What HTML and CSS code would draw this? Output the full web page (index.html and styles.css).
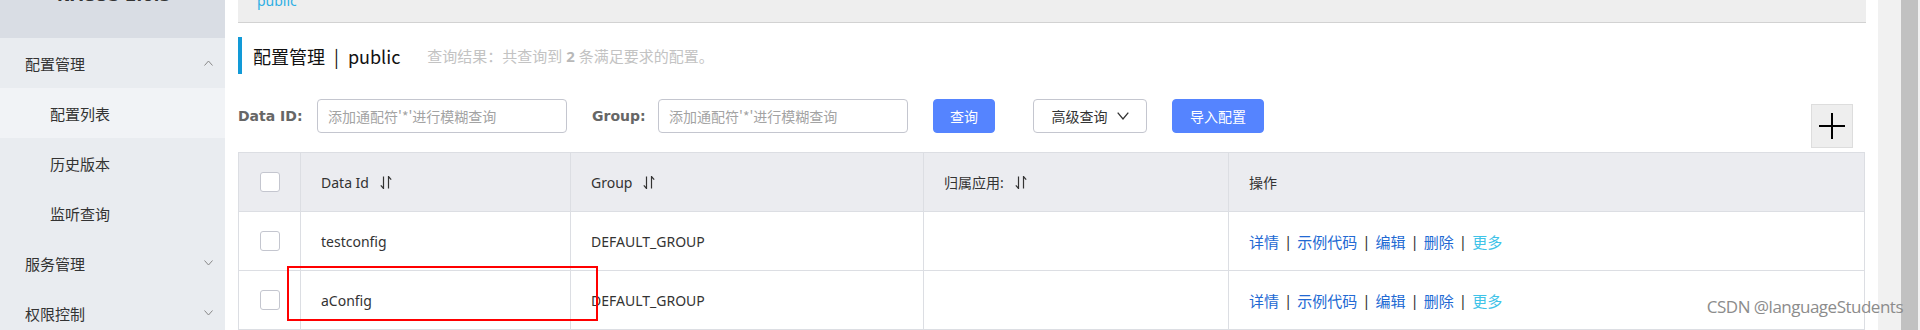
FILE: index.html
```html
<!DOCTYPE html>
<html lang="zh-CN">
<head>
    <meta charset="UTF-8">
    <meta name="viewport" content="width=device-width, initial-scale=1.0">
    <title>配置列表</title>
    <link rel="stylesheet" href="styles.css">
</head>
<body>
    <div class="page">
        <aside class="sidebar">
            <div class="logo"><span class="logo-text">NACOS 2.0.3</span></div>
            <div class="menu-item">
                <span>配置管理</span>
                <svg class="menu-arrow" viewBox="0 0 9 6"><polyline points="0.5,5.5 4.5,1 8.5,5.5" /></svg>
            </div>
            <div class="menu-sub active">配置列表</div>
            <div class="menu-sub">历史版本</div>
            <div class="menu-sub">监听查询</div>
            <div class="menu-item">
                <span>服务管理</span>
                <svg class="menu-arrow" viewBox="0 0 9 6"><polyline points="0.5,0.5 4.5,5 8.5,0.5" /></svg>
            </div>
            <div class="menu-item">
                <span>权限控制</span>
                <svg class="menu-arrow" viewBox="0 0 9 6"><polyline points="0.5,0.5 4.5,5 8.5,0.5" /></svg>
            </div>
        </aside>

        <main class="main">
            <div class="crumbs"><span>public</span></div>

            <div class="title-row">
                <h2 class="page-title">配置管理<span class="sep">|</span>public</h2>
                <span class="result">查询结果：共查询到 <b>2</b> 条满足要求的配置。</span>
            </div>

            <div class="filter-row">
                <label class="filter-label label-id" for="data-id">Data ID:</label>
                <input class="filter-input" id="data-id" type="text" placeholder="添加通配符'*'进行模糊查询">
                <label class="filter-label label-group" for="group">Group:</label>
                <input class="filter-input" id="group" type="text" placeholder="添加通配符'*'进行模糊查询">
                <button type="button" class="btn btn-primary btn-query">查询</button>
                <button type="button" class="btn btn-normal btn-advanced">
                    高级查询
                    <svg class="btn-arrow" viewBox="0 0 12 8"><polyline points="0.7,0.7 6,7 11.3,0.7" /></svg>
                </button>
                <button type="button" class="btn btn-primary btn-import">导入配置</button>
                <button type="button" class="btn-add">
                    <svg viewBox="0 0 26 26"><line x1="0" y1="13" x2="26" y2="13" /><line x1="13" y1="0" x2="13" y2="26" /></svg>
                </button>
            </div>

            <div class="table">
                <div class="table-row table-head">
                    <div class="cell cell-check"><span class="checkbox"></span></div>
                    <div class="cell">Data Id
                        <svg class="sort-icon" viewBox="0 0 12 13"><path d="M3.5 0.5V12.5L0.8 9.4M8.5 12.5V0.5L11.2 3.6" /></svg>
                    </div>
                    <div class="cell">Group
                        <svg class="sort-icon" viewBox="0 0 12 13"><path d="M3.5 0.5V12.5L0.8 9.4M8.5 12.5V0.5L11.2 3.6" /></svg>
                    </div>
                    <div class="cell">归属应用:
                        <svg class="sort-icon" viewBox="0 0 12 13"><path d="M3.5 0.5V12.5L0.8 9.4M8.5 12.5V0.5L11.2 3.6" /></svg>
                    </div>
                    <div class="cell">操作</div>
                </div>
                <div class="table-row">
                    <div class="cell cell-check"><span class="checkbox"></span></div>
                    <div class="cell">testconfig</div>
                    <div class="cell">DEFAULT_GROUP</div>
                    <div class="cell"></div>
                    <div class="cell actions">
                        <a>详情</a><span class="bar">|</span><a>示例代码</a><span class="bar">|</span><a>编辑</a><span class="bar">|</span><a>删除</a><span class="bar">|</span><a class="more">更多</a>
                    </div>
                </div>
                <div class="table-row">
                    <div class="cell cell-check"><span class="checkbox"></span></div>
                    <div class="cell">aConfig</div>
                    <div class="cell">DEFAULT_GROUP</div>
                    <div class="cell"></div>
                    <div class="cell actions">
                        <a>详情</a><span class="bar">|</span><a>示例代码</a><span class="bar">|</span><a>编辑</a><span class="bar">|</span><a>删除</a><span class="bar">|</span><a class="more">更多</a>
                    </div>
                </div>
            </div>
        </main>

        <div class="scrollbar">
            <div class="scroll-track"></div>
            <div class="scroll-thumb"></div>
        </div>
    </div>

    <div class="highlight"></div>
    <div class="watermark">CSDN @languageStudents</div>
</body>
</html>
```

FILE: styles.css
```css
* {
    box-sizing: border-box;
}
body {
    margin: 0;
    width: 1920px;
    height: 330px;
    overflow: hidden;
    position: relative;
    font-family: "Noto Sans", "Noto Sans CJK SC", sans-serif;
    font-size: 14px;
    color: #333;
    background-color: #fff;
}
.page {
    display: flex;
    height: 330px;
}

/* sidebar */
.sidebar {
    width: 225px;
    flex-shrink: 0;
    background-color: #e9ecf0;
}
.logo {
    height: 38px;
    background-color: #d9dde4;
    overflow: hidden;
    padding-left: 57px;
}
.logo-text {
    display: block;
    margin-top: -14px;
    font: bold 16px/20px "DejaVu Sans", sans-serif;
    color: #333;
}
.menu-item {
    height: 50px;
    display: flex;
    align-items: center;
    justify-content: space-between;
    padding: 0 12px 0 25px;
    font-size: 15px;
    color: #333;
}
.menu-sub {
    height: 50px;
    display: flex;
    align-items: center;
    padding-left: 50px;
    font-size: 15px;
    color: #333;
}
.menu-sub.active {
    background-color: #f1f3f6;
}
.menu-arrow {
    width: 9px;
    height: 6px;
    fill: none;
    stroke: #888;
    stroke-width: 1;
}

/* main */
.main {
    flex: 1;
    min-width: 0;
    padding: 0 12px 0 13px;
}
.crumbs {
    height: 23px;
    background-color: #eee;
    border-bottom: 1px solid #d2d2d2;
    overflow: hidden;
    padding-left: 19px;
}
.crumbs span {
    display: block;
    margin-top: -9px;
    line-height: 20px;
    color: #2eaee4;
}
.title-row {
    margin-top: 14px;
    height: 37px;
    border-left: 4px solid #129ad7;
    padding-left: 11px;
    display: flex;
    align-items: center;
}
.page-title {
    margin: 0;
    font-family: "Noto Sans CJK SC", sans-serif;
    font-size: 18px;
    font-weight: normal;
    color: #111;
}
.page-title .sep {
    margin: 0 9px;
}
.result {
    margin-left: 27px;
    font-size: 15px;
    color: #c3c3c3;
}
.result b {
    color: #b8b8b8;
}

/* filter */
.filter-row {
    margin-top: 25px;
    display: flex;
    align-items: flex-start;
}
.filter-label {
    font: bold 14px/34px "DejaVu Sans", sans-serif;
    color: #666;
    white-space: nowrap;
}
.label-id {
    width: 79px;
}
.label-group {
    width: 66px;
    margin-left: 25px;
}
.filter-input {
    width: 250px;
    height: 34px;
    border: 1px solid #c4c6cf;
    border-radius: 4px;
    padding: 0 10px;
    font: 14px "Noto Sans CJK SC", sans-serif;
    color: #333;
    outline: none;
}
.filter-input::placeholder {
    color: #a3a3a3;
}
.btn {
    height: 34px;
    padding: 0;
    border-radius: 4px;
    font: 14px "Noto Sans CJK SC", sans-serif;
    cursor: pointer;
}
.btn-primary {
    background-color: #5584ff;
    border: 1px solid #5584ff;
    color: #fff;
}
.btn-normal {
    background-color: #fff;
    border: 1px solid #c4c6cf;
    color: #333;
    display: flex;
    align-items: center;
    justify-content: center;
    gap: 9px;
}
.btn-arrow {
    width: 12px;
    height: 8px;
    fill: none;
    stroke: #333;
    stroke-width: 1.3;
}
.btn-query {
    width: 62px;
    margin-left: 25px;
}
.btn-advanced {
    width: 114px;
    margin-left: 38px;
}
.btn-import {
    width: 92px;
    margin-left: 25px;
}
.btn-add {
    width: 42px;
    height: 44px;
    margin: 5px 13px 0 auto;
    padding: 0;
    background-color: #eee;
    border: 1px solid #ddd;
    display: flex;
    align-items: center;
    justify-content: center;
}
.btn-add svg {
    width: 26px;
    height: 26px;
    stroke: #000;
    stroke-width: 2;
}

/* table */
.table {
    margin: 4px 1px 0 0;
    border-top: 1px solid #dcdee3;
    border-left: 1px solid #dcdee3;
}
.table-row {
    display: grid;
    grid-template-columns: 62px 270px 353px 305px 1fr;
    height: 59px;
    border-bottom: 1px solid #dcdee3;
}
.table-head {
    background-color: #ebecf0;
}
.cell {
    display: flex;
    align-items: center;
    padding-left: 20px;
    border-right: 1px solid #dcdee3;
    white-space: nowrap;
}
.cell-check {
    padding-left: 0;
    justify-content: center;
}
.checkbox {
    width: 20px;
    height: 20px;
    border: 1px solid #c4c6cf;
    border-radius: 3px;
    background-color: #fff;
}
.sort-icon {
    width: 12px;
    height: 13px;
    margin-left: 11px;
    fill: none;
    stroke: #333;
    stroke-width: 1.2;
}
.actions {
    font-size: 15px;
}
.actions a {
    color: #2269d3;
}
.actions a.more {
    color: #3fc3e8;
}
.actions .bar {
    margin: 0 5px;
    color: #333;
}

/* page scrollbar */
.scrollbar {
    width: 42px;
    flex-shrink: 0;
    display: flex;
    background-color: #f1f1f1;
}
.scroll-track {
    width: 23px;
}
.scroll-thumb {
    width: 17px;
    background-color: #c1c1c1;
}

/* screenshot annotations */
.highlight {
    position: absolute;
    left: 287px;
    top: 266px;
    width: 311px;
    height: 55px;
    border: 2px solid #f00;
}
.watermark {
    position: absolute;
    right: 17px;
    top: 296px;
    font: 17px/22px "Open Sans", sans-serif;
    letter-spacing: -0.5px;
    color: #8c8c8c;
}
```
